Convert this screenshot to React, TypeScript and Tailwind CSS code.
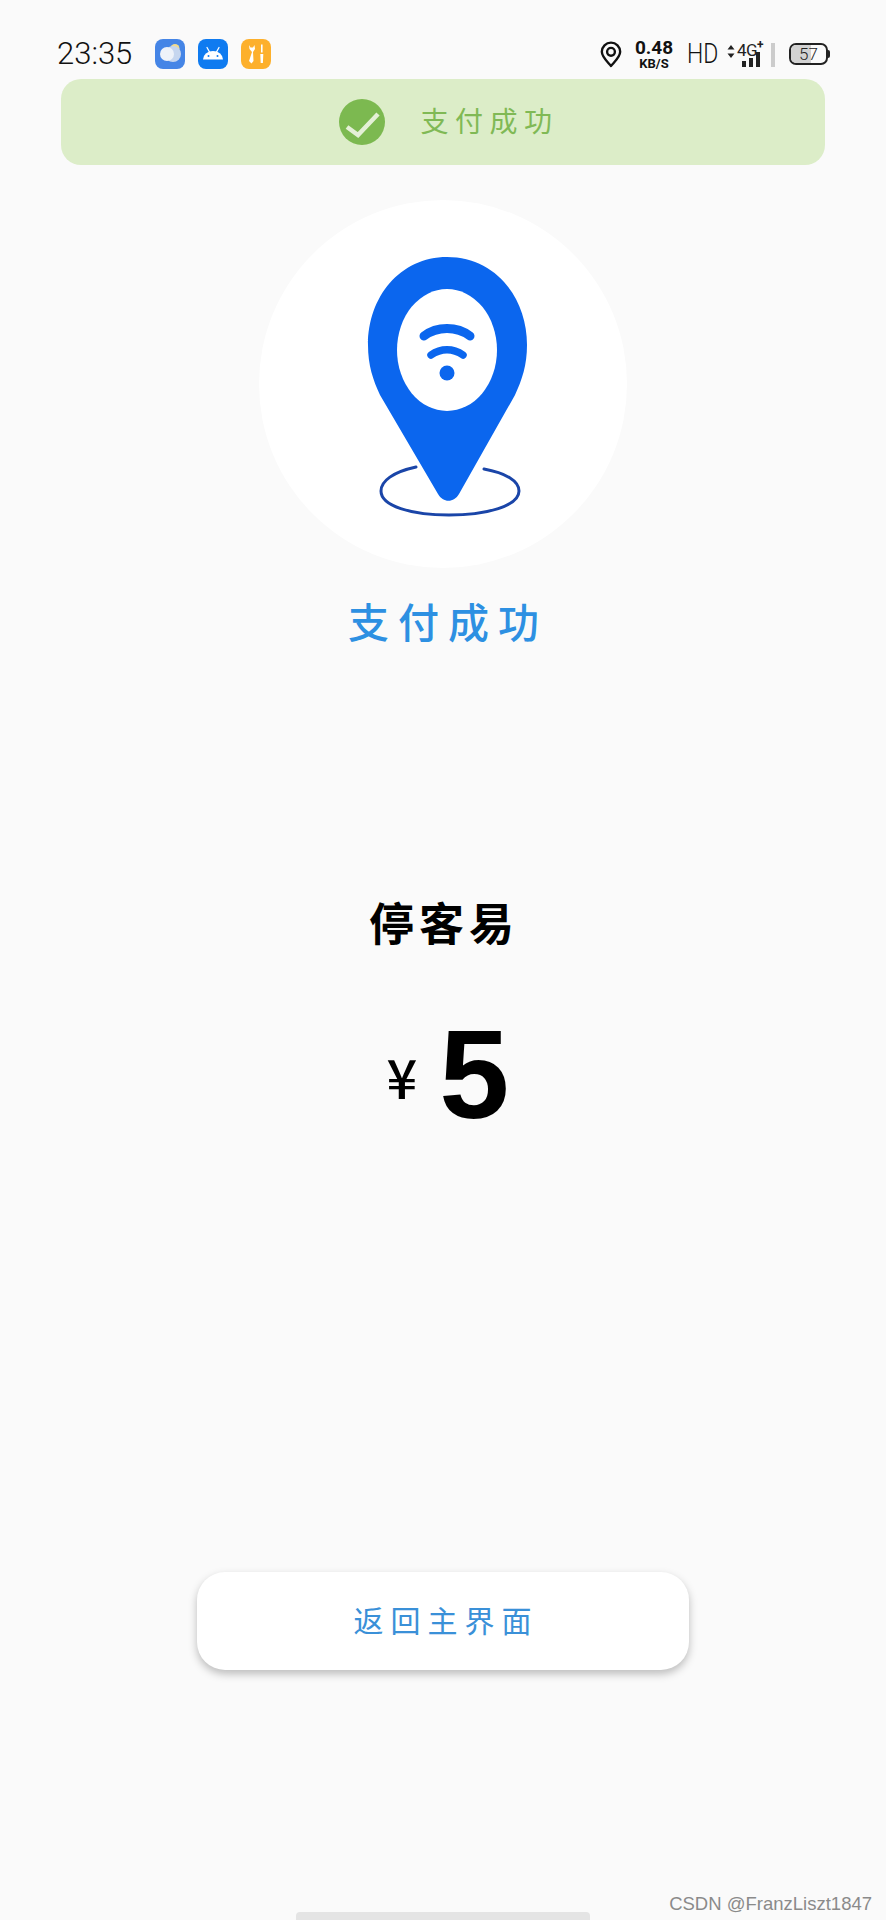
import React from "react";

const cjk = "font-['Noto_Sans_CJK_SC',sans-serif]";

const WeatherIcon = () => (
  <svg width="30" height="30" viewBox="0 0 30 30">
    <rect width="30" height="30" rx="8" fill="#4585e6" />
    <circle cx="20" cy="9.500" r="4.500" fill="#f3dc8e" />
    <circle cx="18" cy="15" r="8" fill="#c6d6ef" />
    <circle cx="12" cy="15" r="7" fill="#eef2f9" />
  </svg>
);

const AndroidIcon = () => (
  <svg width="30" height="30" viewBox="0 0 30 30">
    <rect width="30" height="30" rx="8" fill="#0f7bf0" />
    <path d="M5 20.500a10 8.500 0 0 1 20 0z" fill="#fff" />
    <path d="M9 8.500l2.500 4.500M21 8.500L18.500 13" stroke="#fff" strokeWidth="1.300" strokeLinecap="round" />
    <circle cx="10.500" cy="17" r="1" fill="#0f7bf0" />
    <circle cx="19.500" cy="17" r="1" fill="#0f7bf0" />
  </svg>
);

const ToolsIcon = () => (
  <svg width="30" height="30" viewBox="0 0 30 30">
    <rect width="30" height="30" rx="8" fill="#fdb02c" />
    <path d="M8 6l.5 4 2.500 3-3 9 2.500 2.500 2-2.500-.5-9 2-3-.5-4-1.500 2.500h-2.500z" fill="#fff" />
    <path d="M20 5.500h1.600v8H20zM19.300 15h3l-.4 9h-2.200z" fill="#fff" />
  </svg>
);

const PinSmall = () => (
  <svg width="22" height="27" viewBox="0 0 20 25" fill="none">
    <path d="M10 23.200C5.500 18 1.500 14.500 1.500 10a8.500 8.500 0 0 1 17 0c0 4.500-4 8-8.500 13.200z" stroke="#111" strokeWidth="2.200" strokeLinejoin="round" />
    <circle cx="10" cy="10" r="3.600" stroke="#111" strokeWidth="2.200" />
  </svg>
);

const Signal = () => (
  <div className="relative h-[26px] w-[48px]">
    <svg className="absolute left-0 top-[4px]" width="8" height="13" viewBox="0 0 8 13" fill="#222">
      <path d="M4 0l3.500 4.500h-7zM4 13L.5 8.500h7z" />
    </svg>
    <span className="absolute left-[10px] top-[-1px] font-['Roboto',sans-serif] text-[17px] leading-[20px] tracking-[-0.5px] text-[#222]">
      4G
    </span>
    <span className="absolute left-[30px] top-[-3px] font-['Roboto',sans-serif] text-[12px] font-bold leading-[14px] text-[#222]">
      +
    </span>
    <div className="absolute bottom-0 left-[15px] flex items-end gap-[3px]">
      <div className="h-[6px] w-[4px] bg-[#222]" />
      <div className="h-[9px] w-[4px] bg-[#222]" />
      <div className="h-[15px] w-[4px] bg-[#222]" />
    </div>
    <div className="absolute bottom-0 right-0 h-[24px] w-[4px] bg-[#ccc]" />
  </div>
);

const Battery = () => (
  <div className="flex items-center">
    <div className="relative flex h-[22px] w-[39px] items-center justify-center overflow-hidden rounded-[7px] border-2 border-[#222]">
      <div className="absolute inset-y-0 left-0 w-[57%] bg-[#d2d2d2]" />
      <span className="relative font-['Roboto',sans-serif] text-[17px] font-light leading-none text-[#222]">57</span>
    </div>
    <div className="h-[8px] w-[2px] rounded-r-sm bg-[#222]" />
  </div>
);

const BigPin = () => (
  <svg width="368" height="368" viewBox="0 0 368 368" fill="none">
    <path
      d="M157 267C134 272 122 281 122 291C122 306 152 315 190 315C228 315 260 306 260 291C260 281 247 273 225 269"
      stroke="#1a45a8"
      strokeWidth="3"
      strokeLinecap="round"
    />
    <path
      d="M188 57C236 57 268 97 268 145C268 165 263 180 256 195L200 294C195 303 184 303 179 294L121 195C114 180 109 165 109 145C109 97 141 57 188 57Z"
      fill="#0b66ee"
    />
    <ellipse cx="188" cy="150" rx="50" ry="61" fill="#fff" />
    <path d="M165 136C178 126 198 126 211 136" stroke="#0b66ee" strokeWidth="9" strokeLinecap="round" />
    <path d="M172 155C182 148 194 148 204 155" stroke="#0b66ee" strokeWidth="7.500" strokeLinecap="round" />
    <circle cx="188" cy="173" r="7.500" fill="#0b66ee" />
  </svg>
);

export default function App() {
  return (
    <div className="relative flex h-[1920px] w-[886px] flex-col items-center overflow-hidden bg-[#fafafa]">
      {/* Status bar */}
      <div className="flex h-[79px] w-full items-start justify-between pl-[57px] pr-[56px] pt-[38px]">
        <div className="flex items-center">
          <span className="w-[98px] font-['Roboto',sans-serif] text-[31px] font-light leading-[32px] text-[#111]">
            23:35
          </span>
          <div className="flex gap-[13px]">
            <WeatherIcon />
            <AndroidIcon />
            <ToolsIcon />
          </div>
        </div>
        <div className="flex h-[32px] items-center">
          <PinSmall />
          <div className="ml-[11px] flex w-[42px] flex-col items-center font-['Roboto',sans-serif] font-bold text-[#111]">
            <span className="text-[19px] leading-[19px]">0.48</span>
            <span className="text-[13px] leading-[13px]">KB/S</span>
          </div>
          <span className="ml-[12px] w-[31px] origin-left scale-x-[0.82] font-['Roboto',sans-serif] text-[28px] font-light leading-[28px] text-[#111]">
            HD
          </span>
          <div className="ml-[9px]">
            <Signal />
          </div>
          <div className="ml-[14px]">
            <Battery />
          </div>
        </div>
      </div>

      {/* Banner */}
      <div className="flex h-[86px] w-[764px] items-center justify-center gap-[35px] rounded-[20px] bg-[#dcedc8] pl-[12px]">
        <svg width="46" height="46" viewBox="0 0 46 46">
          <circle cx="23" cy="23" r="23" fill="#7cb950" />
          <path d="M8 28l11 8 20-21" stroke="#e4f0d6" strokeWidth="4.500" fill="none" />
        </svg>
        <span className={`${cjk} mt-[-5px] text-[28px] leading-[36px] tracking-[6.500px] text-[#80b955]`}>支付成功</span>
      </div>

      {/* Logo */}
      <div className="mt-[35px] h-[368px] w-[368px] rounded-full bg-white">
        <BigPin />
      </div>

      <div className={`${cjk} mt-[28px] pl-[10px] text-[41px] font-medium leading-[48px] tracking-[9px] text-[#2d90e2]`}>
        支付成功
      </div>

      <div className={`${cjk} mt-[250px] pl-[2px] text-[45px] font-bold leading-[56px] tracking-[5px] text-black`}>
        停客易
      </div>

      <div className="mt-[65px] flex h-[120px] items-center pl-[10px]">
        <span className={`${cjk} mt-[2px] text-[54px] font-medium leading-none text-black`}>¥</span>
        <span className="ml-[22px] font-['Liberation_Sans',sans-serif] text-[126px] font-bold leading-none text-black">
          5
        </span>
      </div>

      {/* Return button */}
      <button className="mt-[437px] flex h-[98px] w-[492px] items-center justify-center rounded-[28px] bg-white shadow-[0_4px_8px_rgba(0,0,0,0.25)]">
        <span className={`${cjk} mt-[-4px] pl-[6px] text-[30px] leading-[40px] tracking-[7px] text-[#3a90d8]`}>返回主界面</span>
      </button>

      {/* Home indicator */}
      <div className="mt-auto h-[8px] w-[294px] rounded-t-[4px] bg-[#e4e4e4]" />

      {/* Watermark */}
      <span className="absolute bottom-[5px] right-[14px] font-['Liberation_Sans',sans-serif] text-[18.500px] leading-[22px] text-[#8a8a8a]">
        CSDN @FranzLiszt1847
      </span>
    </div>
  );
}
